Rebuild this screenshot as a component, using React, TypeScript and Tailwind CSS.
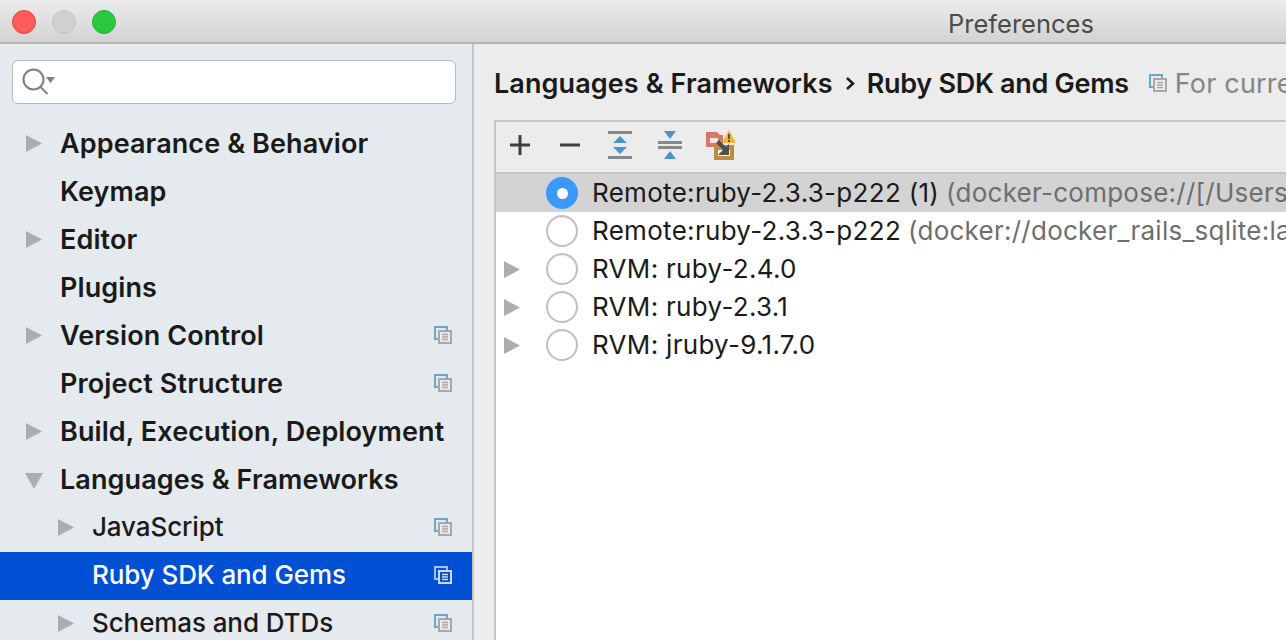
import type { ReactNode } from "react";

function CopyIcon({ active = false }: { active?: boolean }) {
  const back = active ? "#9fc3ee" : "#6da4c9";
  const front = active ? "#d6d6d6" : "#a8a8a8";
  return (
    <svg className="shrink-0" width="18" height="18" viewBox="0 0 18 18" fill="none">
      <path d="M1 14V1h13M1 13h4M13 1v4" stroke={back} strokeWidth="2" />
      <rect x="5" y="5" width="12" height="12" stroke={front} strokeWidth="2" />
      <path d="M8 8.500h6M8 11h6M8 13.500h6" stroke={front} strokeWidth="1.400" />
    </svg>
  );
}

function Arrow({ down = false, color = "#adadad" }: { down?: boolean; color?: string }) {
  return (
    <svg className="shrink-0" width="18" height="18" viewBox="0 0 18 18">
      {down ? <path d="M0 2h18L9 18z" fill={color} /> : <path d="M1 0l16 8.500L1 17z" fill={color} />}
    </svg>
  );
}

function NavRow({
  label,
  arrow,
  indent = false,
  copy = false,
  active = false,
}: {
  label: string;
  arrow?: "right" | "down";
  indent?: boolean;
  copy?: boolean;
  active?: boolean;
}) {
  return (
    <div className={`flex h-12 shrink-0 items-center pr-[20px] ${active ? "bg-[#0050d6] text-white" : "text-[#1a1a1a]"}`}>
      <div className={`flex w-[18px] shrink-0 ${indent ? "ml-[57px]" : "ml-[25px]"}`}>
        {arrow && <Arrow down={arrow === "down"} />}
      </div>
      <span
        className={`whitespace-nowrap pb-[2px] leading-none ${indent ? "ml-[17px] text-[26px] font-medium tracking-[-0.1px]" : "ml-[17px] text-[27px] font-semibold tracking-[0.1px]"}`}
      >
        {label}
      </span>
      <div className="ml-auto flex pb-[2px]">{copy && <CopyIcon active={active} />}</div>
    </div>
  );
}

function ToolButton({ children }: { children: ReactNode }) {
  return <div className="flex h-[30px] w-[50px] shrink-0 items-center justify-center">{children}</div>;
}

function Radio({ checked = false }: { checked?: boolean }) {
  if (checked) {
    return (
      <div className="flex h-8 w-8 items-center justify-center rounded-full bg-[#3b99fc]">
        <div className="h-[11px] w-[11px] rounded-full bg-white" />
      </div>
    );
  }
  return <div className="h-8 w-8 rounded-full border-2 border-[#c0c0c0] bg-white shadow-[inset_0_1px_1px_rgba(0,0,0,0.08)]" />;
}

function SdkRow({
  name,
  detail,
  arrow = false,
  selected = false,
}: {
  name: string;
  detail?: string;
  arrow?: boolean;
  selected?: boolean;
}) {
  return (
    <div className={`flex h-[38px] shrink-0 items-center ${selected ? "bg-[#d3d3d3]" : ""}`}>
      <div className="ml-[8px] flex w-[16px] shrink-0">
        {arrow && (
          <svg width="16" height="17" viewBox="0 0 16 17">
            <path d="M0 0l16 8.500L0 17z" fill="#adadad" />
          </svg>
        )}
      </div>
      <div className="ml-[26px] shrink-0">
        <Radio checked={selected} />
      </div>
      <span className="ml-[14px] whitespace-nowrap text-[26px] leading-none tracking-[0.3px] text-[#1a1a1a]">{name}</span>
      {detail && (
        <span className="ml-[7px] whitespace-nowrap text-[26px] leading-none tracking-[0.25px] text-[#6e6e6e]">{detail}</span>
      )}
    </div>
  );
}

export default function App() {
  return (
    <div className="flex h-[640px] w-[1286px] flex-col overflow-hidden bg-[#ececec] font-['Inter','Liberation_Sans',sans-serif]">
      <div className="flex h-11 shrink-0 items-center border-b-2 border-[#b4b4b4] bg-gradient-to-b from-[#ebebeb] to-[#d3d3d3] pl-3 pt-[2px]">
        <div className="flex w-[940px] shrink-0 gap-4">
          <div className="h-6 w-6 rounded-full border border-[#e2463f] bg-[#fc5b57]" />
          <div className="h-6 w-6 rounded-full border border-[#c0c0c0] bg-[#d0d0d0]" />
          <div className="h-6 w-6 rounded-full border border-[#1fb53a] bg-[#28c93f]" />
        </div>
        <span className="ml-[-4px] whitespace-nowrap pt-[3px] text-[25.5px] leading-none text-[#4b4b4b]">Preferences</span>
      </div>

      <div className="flex min-h-0 flex-1">
        <aside className="flex w-[474px] shrink-0 flex-col border-r-2 border-[#c6c6c6] bg-[#e5eaef]">
          <div className="mx-3 my-4 mr-4 flex h-11 shrink-0 items-center rounded-md border border-[#b9b9b9] bg-white pl-[9px]">
            <svg width="34" height="30" viewBox="0 0 34 30" fill="none">
              <circle cx="11.5" cy="12.5" r="10" stroke="#808080" strokeWidth="2" />
              <path d="M18.5 20l7 7" stroke="#808080" strokeWidth="2" />
              <path d="M24 10h9l-4.500 6z" fill="#808080" />
            </svg>
          </div>
          <NavRow label="Appearance & Behavior" arrow="right" />
          <NavRow label="Keymap" />
          <NavRow label="Editor" arrow="right" />
          <NavRow label="Plugins" />
          <NavRow label="Version Control" arrow="right" copy />
          <NavRow label="Project Structure" copy />
          <NavRow label="Build, Execution, Deployment" arrow="right" />
          <NavRow label="Languages & Frameworks" arrow="down" />
          <NavRow label="JavaScript" arrow="right" indent copy />
          <NavRow label="Ruby SDK and Gems" indent copy active />
          <NavRow label="Schemas and DTDs" arrow="right" indent copy />
        </aside>

        <main className="flex min-w-0 flex-1 flex-col pl-[20px]">
          <div className="flex h-[76px] shrink-0 items-center whitespace-nowrap pt-[2px]">
            <span className="shrink-0 text-[27px] font-semibold leading-none tracking-[0.1px] text-[#1a1a1a]">
              Languages &amp; Frameworks
            </span>
            <svg className="ml-[11px] shrink-0" width="14" height="16" viewBox="0 0 14 16" fill="none">
              <path d="M3 3l6 5.500L3 14" stroke="#1a1a1a" strokeWidth="2.500" />
            </svg>
            <span className="ml-[9px] shrink-0 text-[27px] font-semibold leading-none tracking-[-0.3px] text-[#1a1a1a]">
              Ruby SDK and Gems
            </span>
            <div className="ml-5 flex shrink-0">
              <CopyIcon />
            </div>
            <span className="ml-2 shrink-0 text-[27px] leading-none tracking-[0.2px] text-[#858585]">For current project</span>
          </div>

          <div className="flex min-h-0 flex-1 flex-col border-l-2 border-t-2 border-[#c6c6c6] bg-white">
            <div className="flex h-[52px] shrink-0 items-center border-b-2 border-[#c6c6c6] bg-[#ececec] pb-1">
              <div className="-ml-px flex items-center">
                <ToolButton>
                  <svg width="20" height="20" viewBox="0 0 20 20">
                    <path d="M10 0v20M0 10h20" stroke="#3e3e3e" strokeWidth="3" />
                  </svg>
                </ToolButton>
                <ToolButton>
                  <svg width="20" height="20" viewBox="0 0 20 20">
                    <path d="M0 10h20" stroke="#3e3e3e" strokeWidth="3" />
                  </svg>
                </ToolButton>
                <ToolButton>
                  <svg width="24" height="28" viewBox="0 0 24 28">
                    <path d="M0 1.500h24M0 26.500h24" stroke="#888" strokeWidth="3" />
                    <path d="M12 5l7 7H5zM12 23l7-7H5z" fill="#4b93c9" />
                  </svg>
                </ToolButton>
                <ToolButton>
                  <svg width="24" height="28" viewBox="0 0 24 28">
                    <path d="M0 11.500h24M0 16.500h24" stroke="#888" strokeWidth="3" />
                    <path d="M6 0h12l-6 8zM6 28h12l-6-8z" fill="#4b93c9" />
                  </svg>
                </ToolButton>
                <ToolButton>
                  <svg className="ml-[1px]" width="30" height="30" viewBox="0 0 30 30">
                    <path d="M0 2h11l3 3h3v12H0z" fill="#d9766b" />
                    <path d="M4 8h8v5H4z" fill="#f6e4e1" />
                    <path d="M8 15h20v15H8z" fill="#c08b3c" />
                    <path d="M12 20h12v6H12z" fill="#fbf8f1" />
                    <path d="M11.500 11.500l8 8" stroke="#4f4f4f" strokeWidth="4" />
                    <path d="M23 14v11H12z" fill="#4f4f4f" />
                    <path d="M23 0l7 13H16z" fill="#f2b63c" />
                    <path d="M22.200 4h1.600v5h-1.600zM22.200 10h1.600v2h-1.600z" fill="#4a3a1a" />
                  </svg>
                </ToolButton>
              </div>
            </div>
            <div className="flex flex-col">
              <SdkRow selected name="Remote:ruby-2.3.3-p222 (1)" detail="(docker-compose://[/Users/me/project]:web)" />
              <SdkRow name="Remote:ruby-2.3.3-p222" detail="(docker://docker_rails_sqlite:latest)" />
              <SdkRow arrow name="RVM: ruby-2.4.0" />
              <SdkRow arrow name="RVM: ruby-2.3.1" />
              <SdkRow arrow name="RVM: jruby-9.1.7.0" />
            </div>
          </div>
        </main>
      </div>
    </div>
  );
}
